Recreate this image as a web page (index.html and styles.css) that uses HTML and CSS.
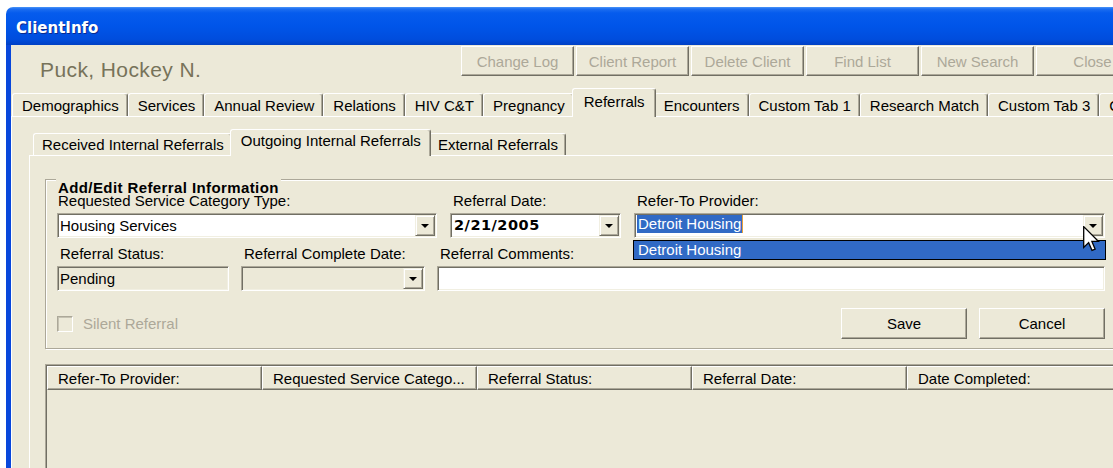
FILE: index.html
```html
<!DOCTYPE html>
<html lang="en">
<head>
<meta charset="utf-8">
<title>ClientInfo</title>
<link rel="stylesheet" href="styles.css">
</head>
<body>
<div class="window">
  <div class="titlebar">ClientInfo</div>
  <div class="frame">
    <div class="head">
      <div class="client-name">Puck, Hockey N.</div>
      <div class="toolbar">
        <button class="btn btn--tool" disabled>Change Log</button>
        <button class="btn btn--tool" disabled>Client Report</button>
        <button class="btn btn--tool" disabled>Delete Client</button>
        <button class="btn btn--tool" disabled>Find List</button>
        <button class="btn btn--tool" disabled>New Search</button>
        <button class="btn btn--tool" disabled>Close</button>
      </div>
    </div>

    <div class="tabs tabs--main">
      <div class="tab">Demographics</div>
      <div class="tab">Services</div>
      <div class="tab">Annual Review</div>
      <div class="tab">Relations</div>
      <div class="tab">HIV C&amp;T</div>
      <div class="tab">Pregnancy</div>
      <div class="tab tab--active">Referrals</div>
      <div class="tab">Encounters</div>
      <div class="tab">Custom Tab 1</div>
      <div class="tab">Research Match</div>
      <div class="tab">Custom Tab 3</div>
      <div class="tab">Custom Tab 4</div>
    </div>

    <div class="tabpanel">
      <div class="subnav">
        <div class="tabs tabs--sub">
          <div class="tab">Received Internal Referrals</div>
          <div class="tab tab--active">Outgoing Internal Referrals</div>
          <div class="tab">External Referrals</div>
        </div>

        <div class="subpanel">
          <div class="group">
            <div class="group-title">Add/Edit Referral Information</div>

            <div class="form-row">
              <div class="field field--category">
                <span class="label">Requested Service Category Type:</span>
                <div class="input">
                  <span class="input-text">Housing Services</span>
                  <span class="drop-btn"></span>
                </div>
              </div>
              <div class="field field--date">
                <span class="label">Referral Date:</span>
                <div class="input">
                  <span class="input-text input-text--date">2/21/2005</span>
                  <span class="drop-btn"></span>
                </div>
              </div>
              <div class="field field--grow">
                <span class="label">Refer-To Provider:</span>
                <div class="input input--focus">
                  <span class="input-text"><span class="selection">Detroit Housing</span></span>
                  <span class="drop-btn"></span>
                  <svg class="pointer" width="17" height="26" viewBox="0 0 13 20" aria-hidden="true">
                    <path d="M0.5 0.5 L0.5 16.5 L4.3 12.8 L6.9 18.8 L9.3 17.8 L6.8 11.9 L11.9 11.9 Z" fill="#fff" stroke="#000" stroke-width="1" stroke-linejoin="miter"/>
                  </svg>
                </div>
                <div class="dropdown">Detroit Housing</div>
              </div>
            </div>

            <div class="form-row form-row--lower">
              <div class="field field--status">
                <span class="label">Referral Status:</span>
                <div class="input input--disabled">
                  <span class="input-text">Pending</span>
                </div>
              </div>
              <div class="field field--complete">
                <span class="label">Referral Complete Date:</span>
                <div class="input input--disabled">
                  <span class="input-text"></span>
                  <span class="drop-btn"></span>
                </div>
              </div>
              <div class="field field--grow field--comments">
                <span class="label">Referral Comments:</span>
                <div class="input">
                  <span class="input-text"></span>
                </div>
              </div>
            </div>

            <div class="form-actions">
              <label class="check">
                <span class="check-box"></span>
                <span>Silent Referral</span>
              </label>
              <button class="btn btn--action btn--save">Save</button>
              <button class="btn btn--action btn--cancel">Cancel</button>
            </div>
          </div>

          <div class="list">
            <div class="list-head">
              <div class="list-col">Refer-To Provider:</div>
              <div class="list-col">Requested Service Catego...</div>
              <div class="list-col">Referral Status:</div>
              <div class="list-col">Referral Date:</div>
              <div class="list-col">Date Completed:</div>
            </div>
          </div>
        </div>
      </div>
    </div>
  </div>
</div>
</body>
</html>
```

FILE: styles.css
```css
* {
  box-sizing: border-box;
}

html,
body {
  margin: 0;
  padding: 0;
}

body {
  background: #fff;
  overflow: hidden;
  font-family: "Liberation Sans", Arial, sans-serif;
  font-size: 15px;
  color: #000;
}

/* ---- window chrome ---- */
.window {
  width: 1130px;
  margin: 7px 0 0 6px;
}

.titlebar {
  height: 38px;
  padding: 13px 0 0 10px;
  line-height: 17px;
  border-radius: 7px 7px 0 0;
  background: linear-gradient(#4a95f8 0, #1c6df0 2px, #055bed 6px, #0055e9 50%, #004ddd 85%, #0040c4 100%);
  color: #fff;
  font-family: "DejaVu Sans", sans-serif;
  font-weight: bold;
  font-size: 15px;
  text-shadow: 1px 1px 0 #0a2a8e;
}

.frame {
  height: 440px;
  background: #ece9d8;
  border-left: 5px solid #0847db;
}

/* ---- header with client name and toolbar ---- */
.head {
  display: flex;
  align-items: flex-start;
  height: 37px;
}

.client-name {
  flex-shrink: 0;
  width: 450px;
  padding: 13px 0 0 29px;
  font-size: 21px;
  line-height: 24px;
  letter-spacing: 0.4px;
  color: #77735a;
}

.toolbar {
  display: flex;
  flex-shrink: 0;
  gap: 2px;
  margin-top: 1px;
}

.btn {
  flex-shrink: 0;
  margin: 0;
  padding: 0;
  font: inherit;
  color: #000;
  background: #ece9d8;
  border: 1px solid;
  border-color: #fff #716f64 #716f64 #fff;
  box-shadow: inset -1px -1px 0 #aca899;
  border-radius: 0;
}

.btn--tool {
  width: 113px;
  height: 30px;
  color: #aca899;
}

.btn--action {
  width: 126px;
  height: 31px;
}

.btn--save {
  margin-left: auto;
}

.btn--cancel {
  margin-left: 12px;
}

/* ---- tab strips ---- */
.tabs {
  display: flex;
  align-items: flex-end;
  white-space: nowrap;
}

.tab {
  flex-shrink: 0;
  line-height: 20px;
  background: #ece9d8;
  border: 1px solid #fff;
  border-bottom: 0;
  border-right-color: #716f64;
  border-radius: 3px 3px 0 0;
  box-shadow: inset -1px 0 0 #aca899;
}

.tab--active {
  position: relative;
  z-index: 1;
  margin: 0 -2px -1px;
}

.tabs--main {
  margin-top: 6px;
  padding-left: 1px;
}

.tabs--main .tab {
  height: 23px;
  padding: 2px 8px 0 9px;
}

.tabs--main .tab--active {
  height: 29px;
  padding: 3px 10px 0 11px;
}

.tabpanel {
  border-top: 1px solid #fff;
  border-left: 1px solid #fff;
}

.subnav {
  margin-left: 17px;
  padding-top: 12px;
}

.tabs--sub {
  padding-left: 4px;
}

.tabs--sub .tab {
  height: 22px;
  padding: 1px 7px 0 8px;
}

.tabs--sub .tab--active {
  height: 27px;
  padding: 1px 9px 0 10px;
}

.subpanel {
  border-top: 1px solid #fff;
  border-left: 1px solid #fff;
  padding-left: 15px;
}

/* ---- group box ---- */
.group {
  margin: 23px 19px 0 0;
  padding: 0 11px 9px;
  border: 1px solid #aca899;
  box-shadow: inset 1px 1px 0 #fff, 1px 1px 0 #fff;
}

.group-title {
  width: max-content;
  margin: -1px 0 0 -1px;
  padding: 3px 2px 0;
  line-height: 12px;
  font-weight: bold;
  letter-spacing: 0.4px;
  background: #ece9d8;
}

.form-row {
  display: flex;
  gap: 13px;
}

.form-row--lower {
  margin-top: 9px;
  gap: 12px;
}

.field {
  display: flex;
  flex-direction: column;
  flex-shrink: 0;
  gap: 5px;
}

.field--category { width: 380px; }
.field--date { width: 171px; }
.field--status { width: 172px; }
.field--complete { width: 184px; }

.field--grow {
  flex: 1;
  position: relative;
}

.label {
  padding-left: 3px;
  line-height: 14px;
  white-space: nowrap;
}

.field--category .label {
  padding-left: 1px;
}

/* sunken edit / combo box */
.input {
  position: relative;
  display: flex;
  height: 25px;
  padding: 1px;
  background: #fff;
  border: 1px solid;
  border-color: #aca899 #fff #fff #aca899;
  box-shadow: inset 1px 1px 0 #716f64, inset -1px -1px 0 #f1efe2;
}

.input--disabled {
  background: #ece9d8;
}

.input-text {
  flex: 1;
  padding-left: 1px;
  line-height: 21px;
  white-space: nowrap;
  overflow: hidden;
}

.input-text--date {
  padding-left: 2px;
  font-family: "DejaVu Sans", sans-serif;
  font-weight: bold;
  font-size: 14.5px;
  letter-spacing: 0.5px;
}

.selection {
  display: inline-block;
  vertical-align: top;
  padding: 0 1px;
  line-height: 18px;
  color: #fff;
  background: #316ac5;
  border-right: 1px solid #e9a13b;
}

.drop-btn {
  display: flex;
  align-items: center;
  justify-content: center;
  width: 20px;
  background: #ece9d8;
  border: 1px solid;
  border-color: #f1efe2 #716f64 #716f64 #f1efe2;
  box-shadow: inset 1px 1px 0 #fff, inset -1px -1px 0 #aca899;
}

.drop-btn::before {
  content: "";
  border-left: 4px solid transparent;
  border-right: 4px solid transparent;
  border-top: 4px solid #000;
}

.dropdown {
  position: absolute;
  z-index: 2;
  top: calc(100% + 2px);
  left: -1px;
  right: -1px;
  height: 20px;
  padding-left: 4px;
  line-height: 18px;
  color: #fff;
  background: #316ac5;
  border: 1px solid #000;
}

.pointer {
  position: absolute;
  z-index: 3;
  top: 12px;
  right: 4px;
}

/* ---- checkbox + buttons ---- */
.form-actions {
  display: flex;
  align-items: center;
  height: 31px;
  margin-top: 17px;
}

.check {
  display: flex;
  align-items: center;
  gap: 10px;
  color: #aca899;
}

.check-box {
  width: 16px;
  height: 16px;
  background: #ece9d8;
  border: 1px solid;
  border-color: #aca899 #fff #fff #aca899;
  box-shadow: inset 1px 1px 0 #c5c2b2;
}

/* ---- list view ---- */
.list {
  height: 120px;
  margin: 15px 19px 0 0;
  padding: 1px;
  background: #ece9d8;
  border: 1px solid;
  border-color: #aca899 #fff #fff #aca899;
  box-shadow: inset 1px 1px 0 #716f64;
}

.list-head {
  display: flex;
}

.list-col {
  flex: 0 0 215px;
  height: 24px;
  padding: 2px 0 0 10px;
  line-height: 20px;
  white-space: nowrap;
  overflow: hidden;
  background: #ece9d8;
  border: 1px solid;
  border-color: #fff #716f64 #716f64 #fff;
  box-shadow: inset -1px -1px 0 #aca899;
}

.list-col:last-child {
  flex: 1;
}
```
